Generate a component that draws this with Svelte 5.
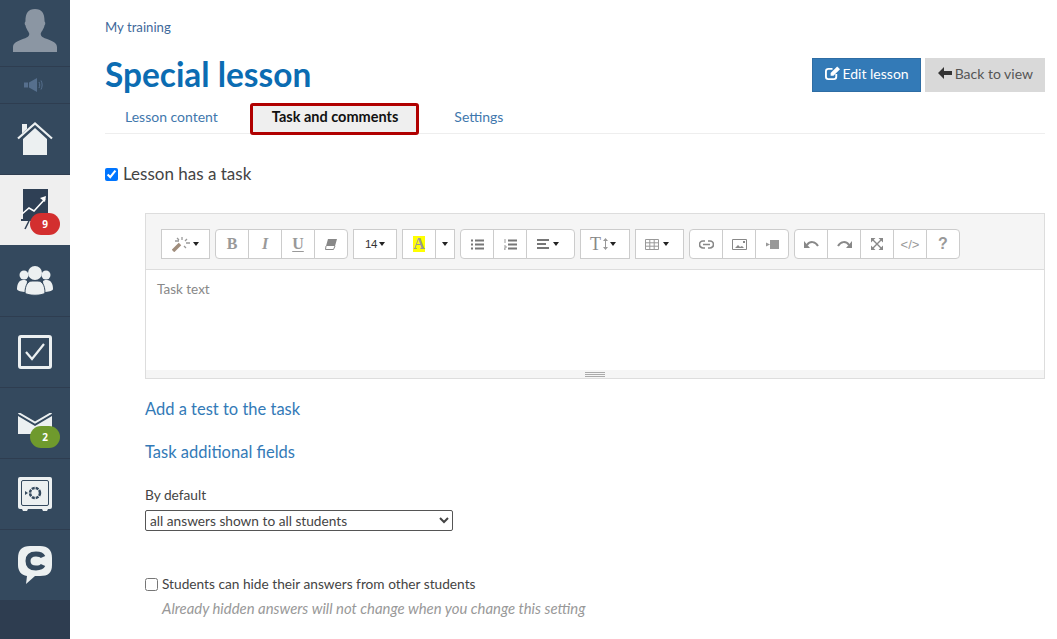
<script>
    const tabs = ["Lesson content", "Task and comments", "Settings"];
    let activeTab = 1;
</script>

<div class="page">
    <nav class="sidebar">
        <div class="side-item avatar">
            <svg width="46" height="44" viewBox="0 0 48 46">
                <path fill="#8b96a3" d="M1 46v-5c0-4 4-6 9-8 6-2 8-3 8-6 0-2-3-4-4-9-1-1-1-3 0-4 0-9 3-13 10-13s10 4 10 13c1 1 1 3 0 4-1 5-4 7-4 9 0 3 2 4 8 6 5 2 9 4 9 8v5z"/>
            </svg>
        </div>
        <div class="side-item sound">
            <svg width="22" height="14" viewBox="0 0 22 14">
                <path fill="#566f8d" d="M0 4.500h4v5h-4zM5 4.500l8-4.500v14l-8-4.500z"/>
                <path fill="none" stroke="#566f8d" d="M15 4c1 2 1 4 0 6M17 2.500c1.500 3 1.500 6 0 9"/>
            </svg>
        </div>
        <div class="side-item">
            <svg width="36" height="34" viewBox="0 0 36 34">
                <path fill="#ecf0f1" d="M6 17 18 6l12 11v16H6zM5 2h5v5l-5 4.500z"/>
                <path fill="none" stroke="#ecf0f1" stroke-width="2.200" d="M1 16.500 18 1.500l17 15"/>
            </svg>
        </div>
        <div class="side-item active">
            <svg width="28" height="42" viewBox="0 0 28 42">
                <path fill="#2f4055" d="M2 0h25v30H2z"/>
                <path fill="none" stroke="#fff" stroke-width="1.600" d="M1 25l7-6 5 3 11-12"/>
                <path fill="#fff" d="M19 9l6-2-1 6z"/>
                <path fill="#2f4055" d="M0 30h24v2H0z"/>
                <path fill="none" stroke="#2f4055" stroke-width="1.500" d="M8 32 4 40"/>
            </svg>
            <span class="badge red">9</span>
        </div>
        <div class="side-item people">
            <svg width="36" height="30" viewBox="0 0 36 30">
                <circle cx="18" cy="7" r="7" fill="#ecf0f1"/>
                <circle cx="7" cy="9" r="4.500" fill="#ecf0f1"/>
                <circle cx="29" cy="9" r="4.500" fill="#ecf0f1"/>
                <path fill="#ecf0f1" d="M0 23c0-5 2-9 6-9h2l2 1-1 11c-4 0-9-1-9-3zM36 23c0-5-2-9-6-9h-2l-2 1 1 11c4 0 9-1 9-3z"/>
                <path fill="#ecf0f1" stroke="#34495e" d="M8 27c0-8 3-12 7-12h6c4 0 7 4 7 12-3 3-17 3-20 0z"/>
            </svg>
        </div>
        <div class="side-item">
            <svg width="34" height="34" viewBox="0 0 34 34">
                <rect x="1.500" y="1.500" width="31" height="31" rx="1.500" fill="none" stroke="#ecf0f1" stroke-width="3"/>
                <path fill="none" stroke="#ecf0f1" stroke-width="2.200" d="M8 17l6 7L26 9"/>
            </svg>
        </div>
        <div class="side-item">
            <svg width="34" height="21" viewBox="0 0 34 21">
                <path fill="#ecf0f1" d="M0 3l17 10L34 3v18H0z"/>
                <path fill="none" stroke="#ecf0f1" stroke-width="2" d="M.500 0 17 9.500 33.500 0"/>
            </svg>
            <span class="badge green">2</span>
        </div>
        <div class="side-item">
            <svg width="34" height="34" viewBox="0 0 34 34">
                <path fill="#ecf0f1" d="M2 0h30a2 2 0 0 1 2 2v28a2 2 0 0 1-2 2h-2l-1 2h-4l-1-2H10l-1 2H5l-1-2H2a2 2 0 0 1-2-2V2a2 2 0 0 1 2-2z"/>
                <rect x="3.500" y="3.500" width="27" height="25" rx="1.500" fill="none" stroke="#34495e"/>
                <circle cx="17" cy="16" r="5" fill="none" stroke="#34495e" stroke-width="2.500" stroke-dasharray="3 .93"/>
                <path fill="#34495e" d="M7 14l3 2-3 2z"/>
            </svg>
        </div>
        <div class="side-item last">
            <svg width="34" height="38" viewBox="0 0 34 38">
                <path fill="#ecf0f1" d="M12 0h10c8 0 12 4 12 12v7c0 8-4 11-12 11h-5l-9 8 1-8c-6-1-9-5-9-11v-7C0 4 4 0 12 0z"/>
                <path fill="none" stroke="#34495e" stroke-width="5" d="M25 11c-1-2-4-3-7-3-5 0-8 2-8 7s3 7 8 7c3 0 6-1 7-3"/>
            </svg>
        </div>
    </nav>

    <main class="content">
        <a class="crumb" href="#top">My training</a>
        <div class="title-row">
            <h1>Special lesson</h1>
            <div class="actions">
                <button class="btn primary">
                    <svg width="15" height="15" viewBox="0 0 16 15">
                        <path fill="none" stroke="#fff" stroke-width="2" d="M12 8v3a2.500 2.500 0 0 1-2.500 2.500h-6A2.500 2.500 0 0 1 1 11V5a2.500 2.500 0 0 1 2.500-2.500H8"/>
                        <path fill="#fff" d="M13 0l3 3-7 7H6V7z"/>
                    </svg>
                    Edit lesson
                </button>
                <button class="btn grey">
                    <svg width="14" height="12" viewBox="0 0 14 12">
                        <path fill="#333" d="M6 0 0 6l6 6V8h8V4H6z"/>
                    </svg>
                    Back to view
                </button>
            </div>
        </div>

        <div class="tabs">
            {#each tabs as tab, i}
                <span class="tab" class:on={i === activeTab}>{tab}</span>
            {/each}
        </div>

        <label class="has-task">
            <input type="checkbox" checked />
            Lesson has a task
        </label>

        <div class="task-block">
            <div class="editor">
                <div class="toolbar">
                    <div class="group flat"><span class="tool w49">
                        <svg width="19" height="15" viewBox="0 0 19 15">
                            <path stroke="#a08d7c" stroke-width="3.500" d="M1 14 8 7"/>
                            <path stroke="#999" stroke-width="1.300" d="M10 0v3M15 2l-2 2M18 6h-4M5 1l2 2M14 11l-2-2M7 4H3"/>
                        </svg>
                        <i class="caret"></i>
                    </span></div>
                    <div class="group">
                        <span class="tool serif">B</span>
                        <span class="tool serif it">I</span>
                        <span class="tool serif un">U</span>
                        <span class="tool">
                            <svg width="12" height="11" viewBox="0 0 12 11">
                                <path fill="#888" d="M3 0h9l-2 7H1z"/>
                                <path fill="none" stroke="#888" d="M1 7 .500 10.500h8L10 7"/>
                            </svg>
                        </span>
                    </div>
                    <div class="group flat"><span class="tool w44 size">14<i class="caret"></i></span></div>
                    <div class="group flat">
                        <span class="tool serif"><span class="hl">A</span></span>
                        <span class="tool w20"><i class="caret"></i></span>
                    </div>
                    <div class="group">
                        <span class="tool">
                            <svg width="13" height="11" viewBox="0 0 13 11">
                                <path stroke="#777" stroke-width="2" d="M0 1.500h2M4 1.500h9M0 5.500h2M4 5.500h9M0 9.500h2M4 9.500h9"/>
                            </svg>
                        </span>
                        <span class="tool">
                            <svg width="13" height="11" viewBox="0 0 13 11">
                                <path stroke="#777" stroke-width="2" d="M4 1.500h9M4 5.500h9M4 9.500h9"/>
                                <path fill="none" stroke="#999" d="M1 0v4M0 7h2v2H0v2h2"/>
                            </svg>
                        </span>
                        <span class="tool w49 wide-gap">
                            <svg width="12" height="10" viewBox="0 0 12 10">
                                <path stroke="#777" stroke-width="2" d="M0 1h12M0 5h9M0 9h12"/>
                            </svg>
                            <i class="caret"></i>
                        </span>
                    </div>
                    <div class="group flat">
                        <span class="tool w50 text-size">
                            <span class="tsize">T</span>
                            <svg width="5" height="12" viewBox="0 0 5 12">
                                <path fill="#999" d="M2.500 0 5 3H0zM2.500 12 0 9h5zM2 3h1v6H2z"/>
                            </svg>
                            <i class="caret"></i>
                        </span>
                    </div>
                    <div class="group flat">
                        <span class="tool w49 wide-gap">
                            <svg width="14" height="11" viewBox="0 0 14 11">
                                <path fill="none" stroke="#999" d="M.500.500h13v10H.500zM.500 3.800h13M.500 7.200h13M4.800.500v10M9.200.500v10"/>
                            </svg>
                            <i class="caret"></i>
                        </span>
                    </div>
                    <div class="group">
                        <span class="tool">
                            <svg width="15" height="9" viewBox="0 0 15 9">
                                <path fill="none" stroke="#888" stroke-width="1.700" d="M6 1H4a3.500 3.500 0 0 0 0 7h2M9 1h2a3.500 3.500 0 0 1 0 7H9M4 4.500h7"/>
                            </svg>
                        </span>
                        <span class="tool">
                            <svg width="15" height="11" viewBox="0 0 15 11">
                                <path fill="none" stroke="#888" d="M.500.500h14v10H.500z"/>
                                <path fill="#888" d="M3 9l3-3 2 2 2-1 2 2zM11 2h2v2h-2z"/>
                            </svg>
                        </span>
                        <span class="tool">
                            <svg width="13" height="9" viewBox="0 0 13 9">
                                <path fill="#999" d="M4 0h9v9H4zM0 2.500 4 4.500 0 6.500z"/>
                            </svg>
                        </span>
                    </div>
                    <div class="group">
                        <span class="tool">
                            <svg width="15" height="9" viewBox="0 0 15 9">
                                <path fill="#888" d="M0 1v7h6z"/>
                                <path fill="none" stroke="#888" stroke-width="2" d="M3 5c3-4 8-4 11 1"/>
                            </svg>
                        </span>
                        <span class="tool">
                            <svg width="15" height="9" viewBox="0 0 15 9">
                                <path fill="#888" d="M15 1v7H9z"/>
                                <path fill="none" stroke="#888" stroke-width="2" d="M12 5C9 1 4 1 1 6"/>
                            </svg>
                        </span>
                        <span class="tool">
                            <svg width="12" height="12" viewBox="0 0 12 12">
                                <path fill="#888" d="M0 0h4.500L0 4.500zM12 0v4.500L7.500 0zM0 12V7.500L4.500 12zM12 12H7.500L12 7.500z"/>
                                <path stroke="#888" stroke-width="1.400" d="M2 2l8 8M10 2l-8 8"/>
                            </svg>
                        </span>
                        <span class="tool code">&lt;/&gt;</span>
                        <span class="tool help">?</span>
                    </div>
                </div>
                <div class="editable">Task text</div>
                <div class="resizer"><i></i></div>
            </div>

            <a class="big-link first" href="#top">Add a test to the task</a>
            <a class="big-link second" href="#top">Task additional fields</a>

            <p class="default-label">By default</p>
            <select class="answers">
                <option>all answers shown to all students</option>
            </select>

            <label class="hide-check">
                <input type="checkbox" />
                Students can hide their answers from other students
            </label>
            <p class="hint">Already hidden answers will not change when you change this setting</p>
        </div>
    </main>
</div>

<style>
    :global(body) {
        margin: 0;
        background: #fff;
    }
    .page {
        display: flex;
        height: 639px;
        overflow: hidden;
        font-family: "Lato", "Open Sans", sans-serif;
        color: #444;
    }
    .sidebar {
        width: 70px;
        flex: none;
        background: #2e3d50;
        display: flex;
        flex-direction: column;
    }
    .side-item {
        position: relative;
        height: 70px;
        flex: none;
        background: #34495e;
        border-bottom: 1px solid #2e3d50;
        display: flex;
        align-items: center;
        justify-content: center;
    }
    .avatar {
        height: 67px;
        align-items: flex-end;
        padding-bottom: 14px;
        box-sizing: border-box;
    }
    .sound {
        height: 36px;
    }
    .active {
        background: #efefef;
        border-bottom: none;
        height: 70px;
    }
    .people {
        height: 71px;
    }
    .last {
        border-bottom: none;
    }
    .badge {
        position: absolute;
        left: 30px;
        width: 30px;
        height: 22px;
        border-radius: 11px;
        color: #fff;
        font: bold 10px/22px "Open Sans", sans-serif;
        text-align: center;
    }
    .badge.red {
        top: 38px;
        background: #d32f2f;
    }
    .badge.green {
        top: 38px;
        background: #6f9a2d;
    }
    .content {
        flex: 1;
        min-width: 0;
        padding: 0 12px 0 35px;
    }
    a {
        color: #337ab7;
        text-decoration: none;
    }
    .crumb {
        display: block;
        padding-top: 20px;
        font-size: 13.2px;
        line-height: 15px;
        color: #3f6a9b;
    }
    .title-row {
        display: flex;
        justify-content: space-between;
        align-items: center;
        margin-top: 18px;
        height: 41px;
    }
    h1 {
        margin: 0 0 0;
        font-size: 33.4px;
        font-weight: 700;
        color: #0b6cb2;
    }
    .actions {
        display: flex;
        gap: 4px;
        margin-top: 3px;
    }
    .btn {
        height: 34px;
        border: 1px solid transparent;
        padding: 0 11px 4px 12px;
        font: 14px "Lato", sans-serif;
        display: flex;
        align-items: center;
        gap: 2px;
    }
    .primary {
        background: #337ab7;
        border-color: #2e6da4;
        color: #fff;
    }
    .grey {
        background: #d9d9d9;
        color: #555;
        gap: 3px;
    }
    .tabs {
        display: flex;
        height: 30px;
        margin-top: 9px;
        border-bottom: 1px solid #eee;
        font-size: 14px;
    }
    .tab {
        padding: 5px 20px 0;
        color: #3f78ad;
    }
    .tab.on {
        box-sizing: border-box;
        height: 32px;
        margin: 0 15px 0 12px;
        padding: 2px 18px 0 19px;
        background: #efefef;
        border: 3px solid #b00000;
        border-radius: 3px;
        color: #111;
        font-size: 14.5px;
        font-weight: 700;
    }
    .has-task {
        display: flex;
        align-items: center;
        gap: 5px;
        margin-top: 30px;
        font-size: 17px;
        line-height: 20px;
    }
    input[type="checkbox"] {
        width: 13px;
        height: 13px;
        margin: 0;
    }
    .task-block {
        margin: 29px 0 0 40px;
    }
    .editor {
        border: 1px solid #ddd;
        box-sizing: border-box;
        height: 166px;
        display: flex;
        flex-direction: column;
    }
    .toolbar {
        display: flex;
        gap: 5px;
        height: 56px;
        flex: none;
        box-sizing: border-box;
        padding: 15px 0 0 15px;
        background: #f5f5f5;
        border-bottom: 1px solid #ddd;
    }
    .group {
        display: flex;
        height: 30px;
    }
    .tool {
        box-sizing: border-box;
        width: 34px;
        height: 30px;
        margin-left: -1px;
        background: #fff;
        border: 1px solid #ccc;
        color: #999;
        display: flex;
        align-items: center;
        justify-content: center;
        gap: 2px;
    }
    .group .tool:first-child {
        margin-left: 0;
        border-radius: 4px 0 0 4px;
    }
    .group .tool:last-child {
        border-radius: 0 4px 4px 0;
    }
    .group.flat .tool {
        border-radius: 0;
    }
    .wide-gap {
        gap: 4px;
        padding-right: 5px;
    }
    .text-size {
        padding-right: 4px;
    }
    .w20 { width: 20px; }
    .w44 { width: 44px; }
    .w49 { width: 49px; }
    .w50 { width: 50px; }
    .serif {
        font: bold 16px "Liberation Serif", serif;
    }
    .it { font-style: italic; }
    .un { text-decoration: underline; text-underline-offset: 2px; }
    .hl {
        background: #ff0;
        line-height: 16px;
    }
    .size {
        font: 11.5px "Liberation Sans", sans-serif;
        letter-spacing: -0.5px;
        color: #333;
        gap: 2px;
    }
    .tsize {
        font: 18px "Liberation Serif", serif;
        color: #888;
    }
    .code {
        font: 13px "Liberation Sans", sans-serif;
    }
    .help {
        font: bold 16px "Liberation Sans", sans-serif;
    }
    .caret {
        width: 0;
        height: 0;
        border-style: solid;
        border-width: 4px 3px 0;
        border-color: #222 transparent transparent;
    }
    .editable {
        flex: 1;
        padding: 9px 11px;
        font-size: 13.5px;
        line-height: 20px;
        color: #888;
    }
    .resizer {
        height: 8px;
        background: #f5f5f5;
        display: flex;
        justify-content: center;
    }
    .resizer i {
        box-sizing: border-box;
        width: 20px;
        height: 5px;
        margin-top: 2px;
        border-top: 1px solid #aaa;
        border-bottom: 1px solid #aaa;
        background: linear-gradient(#aaa, #aaa) center / 100% 1px no-repeat;
    }
    .big-link {
        display: block;
        font-size: 16.5px;
        line-height: 20px;
        color: #337ab7;
    }
    .first {
        margin-top: 20px;
    }
    .second {
        margin-top: 23px;
    }
    .default-label {
        margin: 24px 0 0;
        font-size: 13.7px;
        line-height: 18px;
    }
    .answers {
        display: block;
        width: 308px;
        height: 21px;
        margin-top: 6px;
        font: 13.7px "Lato", sans-serif;
        color: #444;
        background: #fff;
        border: 1px solid #555;
        border-radius: 2px;
    }
    .hide-check {
        display: flex;
        align-items: center;
        gap: 4px;
        margin-top: 44px;
        font-size: 13.7px;
        line-height: 18px;
    }
    .hint {
        margin: 6px 0 0 17px;
        font-size: 14.9px;
        line-height: 18px;
        font-style: italic;
        color: #999;
    }
</style>
